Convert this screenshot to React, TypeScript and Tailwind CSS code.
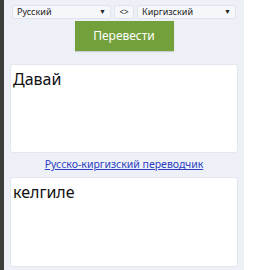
export default function App() {
  return (
    <div className="flex h-[270px] w-[255px] bg-white font-['Noto_Sans',sans-serif]">
      <div className="w-[4px] bg-[#3b3f3b]" />
      <div className="flex w-[240px] flex-col bg-[#eef0f8] px-[6px]">
        {/* language row */}
        <div className="mt-[5px] flex h-[14px] items-stretch gap-[3px] px-[2px] text-[9px] text-[#222]">
          <div className="flex flex-1 items-center justify-between rounded-[2px] border border-[#e2e4ec] bg-[#f6f7fb] px-[4px]">
            <span>Русский</span>
            <span className="text-[7px]">▼</span>
          </div>
          <div className="flex w-[20px] items-center justify-center rounded-[2px] border border-[#e2e4ec] bg-[#f6f7fb] text-[8px]">
            &lt;&gt;
          </div>
          <div className="flex flex-1 items-center justify-between rounded-[2px] border border-[#e2e4ec] bg-[#f6f7fb] px-[4px]">
            <span>Киргизский</span>
            <span className="text-[7px]">▼</span>
          </div>
        </div>
        {/* translate button */}
        <div className="mt-[2px] flex justify-center">
          <div className="flex h-[30px] w-[99px] items-center justify-center bg-[#74a03c] text-[12px] text-white shadow-[0_1px_1px_rgba(0,0,0,0.15)]">
            Перевести
          </div>
        </div>
        {/* source */}
        <div className="mt-[13px] h-[89px] rounded-[3px] border border-[#e4e6ee] bg-white px-[2px] pt-[4px] text-[16px] leading-[20px] text-[#111]">
          Давай
        </div>
        <div className="flex h-[24px] items-center justify-center">
          <a href="#" className="text-[10.5px] text-[#2a3fc0] underline">
            Русско-киргизский переводчик
          </a>
        </div>
        {/* result */}
        <div className="h-[90px] rounded-[3px] border border-[#e4e6ee] bg-white px-[2px] pt-[4px] text-[16px] leading-[20px] text-[#111]">
          келгиле
        </div>
      </div>
    </div>
  );
}
